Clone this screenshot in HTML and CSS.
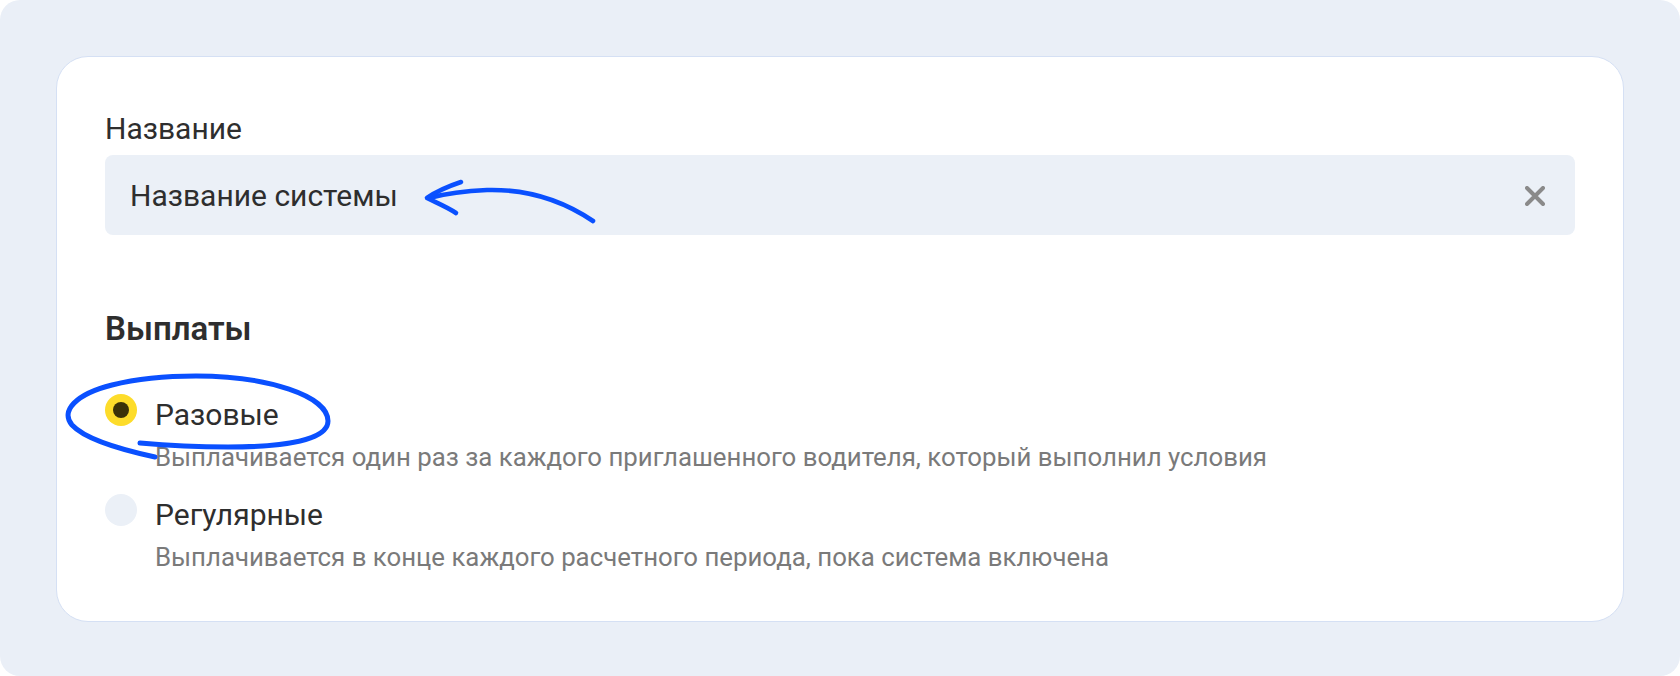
FILE: index.html
```html
<!DOCTYPE html>
<html lang="ru">
<head>
<meta charset="utf-8">
<title>Выплаты</title>
<link rel="stylesheet" href="styles.css">
</head>
<body>
<div class="frame">
  <div class="card">
    <div class="field">
      <div class="label">Название</div>
      <div class="input">
        <span class="value">Название системы</span>
        <span class="clear">
          <svg width="20" height="20" viewBox="0 0 20 20"><path d="M2 2 L18 18 M18 2 L2 18" stroke="#8a8a8a" stroke-width="4" stroke-linecap="round" fill="none"/></svg>
        </span>
      </div>
    </div>
    <div class="section">
      <h2 class="heading">Выплаты</h2>
      <div class="options">
        <div class="option">
          <span class="radio radio-checked"><span class="dot"></span></span>
          <div class="option-text">
            <div class="title">Разовые</div>
            <div class="desc">Выплачивается один раз за каждого приглашенного водителя, который выполнил условия</div>
          </div>
        </div>
        <div class="option">
          <span class="radio"></span>
          <div class="option-text">
            <div class="title">Регулярные</div>
            <div class="desc">Выплачивается в конце каждого расчетного периода, пока система включена</div>
          </div>
        </div>
      </div>
    </div>
  </div>
  <svg class="annotations" viewBox="0 0 1680 676" width="1680" height="676">
    <g fill="none" stroke="#0a50ff" stroke-linecap="round" stroke-linejoin="round">
      <path d="M593 221 C562 200 526 189 487 190 C462 191 444 194 429 198" stroke-width="4.6"/>
      <path d="M461 182 C449 186 437 191 427 198 C437 203 447 207 456 213" stroke-width="4.6"/>
      <path d="M155 457 C118 449 84 438 72 425 C60 411 76 394 112 385 C140 378 168 376 196 376 C268 376 328 396 328 421 C328 440 285 447 228 447 C192 447 162 445 140 443" stroke-width="5"/>
    </g>
  </svg>
</div>
</body>
</html>
```
FILE: styles.css
```css
* { box-sizing: border-box; }

html, body {
  margin: 0;
  padding: 0;
  background: #ffffff;
}

body {
  font-family: Roboto, "Noto Sans", "Liberation Sans", sans-serif;
  color: #2e2e2e;
}

.frame {
  position: relative;
  width: 1680px;
  height: 676px;
  padding: 56px;
  background: #eaeff7;
  border-radius: 20px;
}

.card {
  background: #ffffff;
  border: 1px solid #d5e0f4;
  border-radius: 32px;
  padding: 54px 48px 46px 48px;
}

.field {
  display: flex;
  flex-direction: column;
  gap: 8px;
}

.label {
  font-size: 30px;
  line-height: 36px;
}

.input {
  display: flex;
  align-items: center;
  justify-content: space-between;
  height: 80px;
  padding: 2px 30px 0 25px;
  background: #ebf0f7;
  border-radius: 8px;
  font-size: 30px;
  line-height: 36px;
}

.clear {
  display: flex;
  width: 20px;
  height: 20px;
}

.section {
  margin-top: 76px;
}

.heading {
  margin: 0;
  font-size: 33px;
  line-height: 36px;
  font-weight: 600;
}

.options {
  margin-top: 50px;
  display: flex;
  flex-direction: column;
  gap: 22px;
}

.option {
  display: flex;
  align-items: flex-start;
  gap: 18px;
}

.radio {
  flex: none;
  width: 32px;
  height: 32px;
  margin-top: -3px;
  border-radius: 50%;
  background: #ebf0f7;
  display: flex;
  align-items: center;
  justify-content: center;
}

.radio-checked {
  background: #fddc2a;
}

.dot {
  width: 16px;
  height: 16px;
  border-radius: 50%;
  background: #3a3108;
}

.title {
  font-size: 30px;
  line-height: 36px;
}

.desc {
  margin-top: 6px;
  font-size: 25.8px;
  line-height: 36px;
  color: #7a7a7a;
}

.annotations {
  position: absolute;
  left: 0;
  top: 0;
  pointer-events: none;
}
```
